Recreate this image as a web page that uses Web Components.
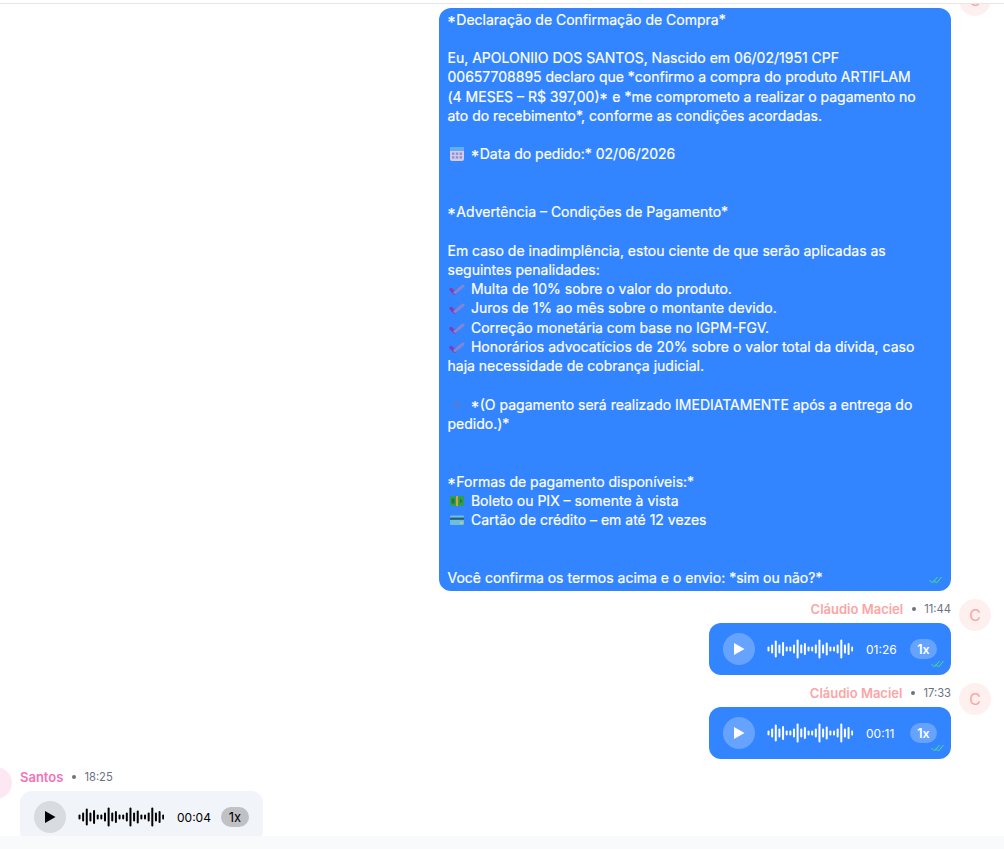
<!DOCTYPE html>
<html lang="pt-BR">
<head>
<meta charset="utf-8">
<title>Conversa</title>
<style>
  html, body { margin: 0; height: 100%; background: #fff; }
  body { font-family: Inter, "Liberation Sans", sans-serif; font-size: 14px; }
</style>
</head>
<body>
<chat-app>
  <chat-row side="out" initial="C">
    <chat-bubble><cap-star>*</cap-star><span>Declaração de Confirmação de Compra*</span>

Eu, APOLONIIO DOS SANTOS, Nascido em 06/02/1951 CPF 00657708895 declaro que *confirmo a compra do produto ARTIFLAM <span>(4 MESES – R$ 397,00)</span><cap-star>*</cap-star><span> e *me comprometo a realizar o pagamento no </span>ato do recebimento*, conforme as condições acordadas.

<chat-emoji name="calendar"></chat-emoji> <cap-star>*</cap-star><span>Data do pedido:* 02/06/2026</span>


<cap-star>*</cap-star><span>Advertência – Condições de Pagamento*</span>

Em caso de inadimplência, estou ciente de que serão aplicadas as seguintes penalidades:
<chat-emoji name="check"></chat-emoji> Multa de 10% sobre o valor do produto.
<chat-emoji name="check"></chat-emoji> Juros de 1% ao mês sobre o montante devido.
<chat-emoji name="check"></chat-emoji> Correção monetária com base no IGPM-FGV.
<chat-emoji name="check"></chat-emoji> Honorários advocatícios de 20% sobre o valor total da dívida, caso haja necessidade de cobrança judicial.

<chat-emoji name="diamond"></chat-emoji> <cap-star>*</cap-star><span>(O pagamento será realizado IMEDIATAMENTE após a entrega do </span>pedido.)*


<cap-star>*</cap-star><span>Formas de pagamento disponíveis:*</span>
<chat-emoji name="money"></chat-emoji> Boleto ou PIX – somente à vista
<chat-emoji name="card"></chat-emoji> Cartão de crédito – em até 12 vezes


Você confirma os termos acima e o envio: *sim ou não?*</chat-bubble>
  </chat-row>
  <chat-row side="out" initial="C" name="Cláudio Maciel" time="11:44">
    <audio-player side="out" duration="01:26"></audio-player>
  </chat-row>
  <chat-row side="out" initial="C" name="Cláudio Maciel" time="17:33">
    <audio-player side="out" duration="00:11"></audio-player>
  </chat-row>
  <chat-row side="in" initial="" name="Santos" time="18:25">
    <audio-player side="in" duration="00:04"></audio-player>
  </chat-row>
</chat-app>

<script>
const ICONS = {
  calendar: `<rect x="1" y="1" width="14" height="14" rx="2" fill="#d6c9f0"/>
    <path d="M1 5V3a2 2 0 0 1 2-2h10a2 2 0 0 1 2 2v2z" fill="#62aeea"/>
    <g fill="#8c93cc"><rect x="3" y="6.5" width="2.4" height="2.4"/><rect x="6.8" y="6.5" width="2.4" height="2.4"/><rect x="10.6" y="6.5" width="2.4" height="2.4"/><rect x="3" y="10.2" width="2.4" height="2.4"/><rect x="6.8" y="10.2" width="2.4" height="2.4"/><rect x="10.6" y="10.2" width="2.4" height="2.4"/></g>`,
  check: `<path d="M2 8.5 5.5 12 8 9.5" fill="none" stroke="#7d3fb8" stroke-width="3.2" stroke-linecap="round" stroke-linejoin="round"/>
    <path d="M6 11.5 14 5" fill="none" stroke="#7f86d6" stroke-width="3" stroke-linecap="round"/>`,
  diamond: `<path d="M8 3.5 12 8 8 12.5 4 8z" fill="#4c7fdc"/>`,
  money: `<rect x="1" y="3" width="14" height="10" rx="1" fill="#2f9e4f"/>
    <rect x="7" y="3" width="2" height="10" fill="#d9a13a"/>
    <rect x="2.5" y="5.5" width="3" height="5" fill="#1f7a3b"/><path d="M11 5.5 13.5 8 11 10.5z" fill="#1f7a3b"/>`,
  card: `<rect x="1" y="3.5" width="14" height="9.5" rx="1" fill="#6cc0de"/>
    <rect x="1" y="5.6" width="14" height="2.2" fill="#2c5a78"/>
    <rect x="11" y="10.2" width="3" height="1.4" fill="#e8c860"/>`
}

class CapStar extends HTMLElement {
  connectedCallback() {
    this.attachShadow({ mode: 'open' }).innerHTML = `<style>
        :host { display: inline; font-size: 16px; line-height: 0; vertical-align: -3px; letter-spacing: .8px; }
      </style><slot></slot>`
  }
}

class ChatEmoji extends HTMLElement {
  connectedCallback() {
    const icon = ICONS[this.getAttribute('name')] || ''
    this.attachShadow({ mode: 'open' }).innerHTML = `
      <style>
        :host { display: inline-block; width: 19.5px; height: 16px; vertical-align: -3px; white-space: normal; line-height: 0; }
        svg { display: block; margin-left: 1.5px; }
      </style>
      <svg width="16" height="16" viewBox="0 0 16 16">${icon}</svg>`
  }
}

class ChatApp extends HTMLElement {
  connectedCallback() {
    this.attachShadow({ mode: 'open' }).innerHTML = `
      <style>
        :host { display: flex; flex-direction: column; height: 100vh; overflow: hidden; background: #fff; color: #111827; }
        header { flex: none; height: 3px; border-bottom: 1px solid #e5e7eb; }
        main { flex: 1; min-height: 0; overflow: hidden; }
        .list { display: flex; flex-direction: column; gap: 8px; margin-top: -20px; padding: 0 13px 0 0; }
        footer { flex: none; height: 13px; background: #f9fafb; }
      </style>
      <header></header>
      <main><div class="list"><slot></slot></div></main>
      <footer></footer>`
  }
}

class ChatRow extends HTMLElement {
  connectedCallback() {
    const name = this.getAttribute('name')
    const time = this.getAttribute('time')
    const meta = name ? `<span class="name">${name}</span><i></i><span class="time">${time}</span>` : ''
    this.attachShadow({ mode: 'open' }).innerHTML = `
      <style>
        :host { display: flex; gap: 8px; align-items: flex-start; }
        :host([side="out"]) { flex-direction: row-reverse; }
        :host([side="in"]) { margin-left: -20px; }
        .avatar { flex: none; width: 32px; height: 32px; border-radius: 50%; display: flex; align-items: center; justify-content: center; font-size: 16px; }
        :host([side="out"]) .avatar { background: #fef0ee; color: #fca5a5; }
        :host([side="in"]) .avatar { background: #fce7f3; color: #f472b6; }
        .col { display: flex; flex-direction: column; min-width: 0; }
        :host([side="out"]) .col { align-items: flex-end; }
        .meta { height: 24px; display: flex; align-items: center; gap: 8.5px; box-sizing: border-box; padding-bottom: 4px; }
        .name { font-size: 13px; font-weight: 600; }
        :host([side="out"]) .name { color: #fca5a5; }
        :host([side="in"]) .name { color: #f472b6; }
        i { width: 4px; height: 4px; border-radius: 50%; background: #6b7280; }
        .time { font-size: 11.2px; color: #6b7280; }
      </style>
      <div class="avatar">${this.getAttribute('initial')}</div>
      <div class="col">
        <div class="meta">${meta}</div>
        <slot></slot>
      </div>`
  }
}

class ChatBubble extends HTMLElement {
  connectedCallback() {
    this.attachShadow({ mode: 'open' }).innerHTML = `<style>
        :host { display: block; box-sizing: border-box; width: 512px; padding: 1.5px 30px 4px 8.5px; border-radius: 12px; background: #3384ff; color: #fff; position: relative; font-size: 14px; line-height: 19.25px; white-space: pre-wrap; -webkit-text-stroke: .2px #fff; }
        read-ticks { position: absolute; right: 9px; bottom: 7px; }
      </style><slot></slot><read-ticks></read-ticks>`
  }
}

class ReadTicks extends HTMLElement {
  connectedCallback() {
    this.attachShadow({ mode: 'open' }).innerHTML = `
      <style>:host { display: block; width: 13px; height: 8px; white-space: normal; } svg { display: block; }</style>
      <svg width="13" height="8" viewBox="0 0 13 8" fill="none" stroke="#4ade80" stroke-width="1">
        <path d="M.5 4 3.5 7 8.5 1"/><path d="M4.5 4 7.5 7 12.5 1"/>
      </svg>`
  }
}

class WaveForm extends HTMLElement {
  connectedCallback() {
    const heights = [5,9,17,9,14,5,5,9,19,9,12,5,5,9,19,9,13,5,5,9,19,9,12,5]
    const bars = heights.map((h, n) => {
      const x = 0.5 + n * 3.64
      return `<rect x="${x.toFixed(2)}" y="${(10 - h / 2).toFixed(1)}" width="2" height="${h}" rx="1"/>`
    }).join('')
    this.attachShadow({ mode: 'open' }).innerHTML = `
      <style>:host { display: block; width: 86px; height: 20px; } svg { display: block; fill: currentColor; }</style>
      <svg width="86" height="20" viewBox="0 0 86 20">${bars}</svg>`
  }
}

class AudioPlayer extends HTMLElement {
  connectedCallback() {
    const out = this.getAttribute('side') === 'out'
    this.attachShadow({ mode: 'open' }).innerHTML = `
      <style>
        :host { display: flex; align-items: center; box-sizing: border-box; height: 52px; width: 242px; padding: 0 14px; border-radius: 12px; position: relative; font-size: 13px; background: #3384ff; color: #fff; }
        :host([side="in"]) { width: 243px; background: #f1f4f9; color: #000; }
        button { flex: none; width: 32px; height: 32px; padding: 0; border: 0; border-radius: 50%; background: rgba(255,255,255,.25); display: flex; align-items: center; justify-content: center; color: inherit; }
        :host([side="in"]) button { background: #d8dbe0; }
        wave-form { margin-left: 12px; }
        .time { margin-left: 13px; width: 30px; white-space: nowrap; font-size: 12px; }
        .speed { margin-left: 14px; width: 27px; height: 20px; border-radius: 10px; background: rgba(255,255,255,.25); display: flex; align-items: center; justify-content: center; font-size: 12.5px; font-weight: 600; }
        :host([side="in"]) .speed { width: 28px; background: #bfc1c4; font-size: 13px; font-weight: 400; }
        read-ticks { position: absolute; right: 7px; bottom: 7px; }
      </style>
      <button aria-label="Reproduzir"><svg width="12" height="14" viewBox="0 0 12 14" fill="currentColor"><path d="M1 1v12l10.5-6z"/></svg></button>
      <wave-form></wave-form>
      <span class="time">${this.getAttribute('duration')}</span>
      <span class="speed">1x</span>
      ${out ? '<read-ticks></read-ticks>' : ''}`
  }
}

customElements.define('cap-star', CapStar)
customElements.define('chat-emoji', ChatEmoji)
customElements.define('read-ticks', ReadTicks)
customElements.define('wave-form', WaveForm)
customElements.define('audio-player', AudioPlayer)
customElements.define('chat-bubble', ChatBubble)
customElements.define('chat-row', ChatRow)
customElements.define('chat-app', ChatApp)
</script>
</body>
</html>
